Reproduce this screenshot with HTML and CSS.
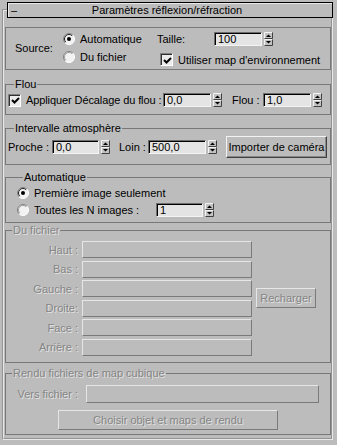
FILE: index.html
```html
<!DOCTYPE html>
<html lang="fr">
<head>
  <meta charset="UTF-8" />
  <title>Paramètres réflexion/réfraction</title>
  <link rel="stylesheet" href="styles.css">
</head>
<body>
  <svg class="defs" width="0" height="0">
    <symbol id="spin" viewBox="0 0 9 14">
      <rect width="9" height="14" fill="#c2c2c2"/>
      <path d="M0.5 6.5V0.5H8" stroke="#f4f4f4" fill="none"/>
      <path d="M0.5 6.5H8.5V0.5" stroke="#404040" fill="none"/>
      <path d="M0.5 13.5V7.5H8" stroke="#f4f4f4" fill="none"/>
      <path d="M0.5 13.5H8.5V7.5" stroke="#404040" fill="none"/>
      <polygon points="2,5 7,5 4.5,2.5" fill="#000"/>
      <polygon points="2,9 7,9 4.5,11.5" fill="#000"/>
    </symbol>
    <symbol id="radio-on" viewBox="0 0 12 12">
      <circle cx="6" cy="6" r="5.5" fill="#f2f2f2"/>
      <path d="M2.1 9.9A5.5 5.5 0 0 1 9.9 2.1" stroke="#808080" fill="none"/>
      <path d="M2.8 9.2A4.5 4.5 0 0 1 9.2 2.8" stroke="#202020" fill="none"/>
      <path d="M2.1 9.9A5.5 5.5 0 0 0 9.9 2.1" stroke="#ffffff" fill="none"/>
      <circle cx="6" cy="6" r="2" fill="#000"/>
    </symbol>
    <symbol id="radio-off" viewBox="0 0 12 12">
      <circle cx="6" cy="6" r="5.5" fill="#f2f2f2"/>
      <path d="M2.1 9.9A5.5 5.5 0 0 1 9.9 2.1" stroke="#808080" fill="none"/>
      <path d="M2.8 9.2A4.5 4.5 0 0 1 9.2 2.8" stroke="#a0a0a0" fill="none"/>
      <path d="M2.1 9.9A5.5 5.5 0 0 0 9.9 2.1" stroke="#ffffff" fill="none"/>
    </symbol>
    <symbol id="tick" viewBox="0 0 9 9">
      <path d="M1 4L3.5 6.5L8 2" stroke="#000" stroke-width="2" fill="none"/>
    </symbol>
  </svg>

  <fieldset class="rollout">
    <legend class="title">
      <span class="minus">–</span>
      <span class="title-text">Paramètres réflexion/réfraction</span>
    </legend>

    <!-- source -->
    <div class="group source">
      <span class="src-label">Source:</span>
      <span class="radio"><svg class="rb"><use href="#radio-on"/></svg>Automatique</span>
      <span class="row">
        <span class="taille">Taille:</span>
        <span class="num w48">100</span>
        <svg class="spin"><use href="#spin"/></svg>
      </span>
      <span class="radio"><svg class="rb"><use href="#radio-off"/></svg>Du fichier</span>
      <span class="check env"><span class="box"><svg><use href="#tick"/></svg></span>Utiliser map d'environnement</span>
    </div>

    <fieldset class="group flou">
      <legend>Flou</legend>
      <div class="row">
        <span class="box"><svg><use href="#tick"/></svg></span>
        <span class="lbl lbl-decal">Appliquer Décalage du flou :</span>
        <span class="num w48">0,0</span>
        <svg class="spin"><use href="#spin"/></svg>
        <span class="lbl lbl-flou">Flou :</span>
        <span class="num w48">1,0</span>
        <svg class="spin"><use href="#spin"/></svg>
      </div>
    </fieldset>

    <fieldset class="group atmo">
      <legend>Intervalle atmosphère</legend>
      <div class="row">
        <span class="lbl lbl-proche">Proche :</span>
        <span class="num w47">0,0</span>
        <svg class="spin"><use href="#spin"/></svg>
        <span class="lbl lbl-loin">Loin :</span>
        <span class="num w58">500,0</span>
        <svg class="spin"><use href="#spin"/></svg>
        <span class="btn btn-cam">Importer de caméra</span>
      </div>
    </fieldset>

    <fieldset class="group auto">
      <legend>Automatique</legend>
      <span class="radio"><svg class="rb"><use href="#radio-on"/></svg>Première image seulement</span>
      <div class="row">
        <span class="radio toutes"><svg class="rb"><use href="#radio-off"/></svg>Toutes les N images :</span>
        <span class="num w47">1</span>
        <svg class="spin"><use href="#spin"/></svg>
      </div>
    </fieldset>

    <fieldset class="group off fichier">
      <legend>Du fichier</legend>
      <span class="side">Haut :</span><span class="field"></span>
      <span class="side">Bas :</span><span class="field"></span>
      <span class="side">Gauche :</span><span class="field"></span>
      <span class="side">Droite:</span><span class="field"></span>
      <span class="side">Face :</span><span class="field"></span>
      <span class="side">Arrière :</span><span class="field"></span>
      <span class="btn btn-reload">Recharger</span>
    </fieldset>

    <fieldset class="group off rendu">
      <legend>Rendu fichiers de map cubique</legend>
      <div class="row">
        <span class="side">Vers fichier :</span>
        <span class="field field-vers"></span>
      </div>
      <span class="btn btn-choisir">Choisir objet et maps de rendu</span>
    </fieldset>
  </fieldset>
</body>
</html>
```

FILE: styles.css
```css
* {
  box-sizing: border-box;
}
body {
  margin: 0;
  width: 337px;
  height: 445px;
  overflow: hidden;
  background: #bcbcbc;
  font-family: 'Liberation Sans', Arial, sans-serif;
  font-size: 11px;
  color: #000;
}
.defs {
  position: absolute;
}

/* rollout */
.rollout {
  margin: 2px 0 0 2px;
  width: 331px;
  min-width: 0;
  height: 438px;
  padding: 0;
  border: 2px groove #e8e8e8;
}
.title {
  margin-left: 3px;
  padding: 0;
  width: 326px;
  height: 16px;
  border: 1px solid #000;
  box-shadow: inset 1px 1px 0 #e8e8e8;
  background: #bcbcbc;
  display: flex;
  align-items: center;
  line-height: 14px;
}
.minus {
  width: 10px;
  padding-left: 3px;
}
.title-text {
  flex: 1;
  text-align: center;
  padding-right: 16px;
}

/* groups */
.group {
  margin: 0 0 0 1px;
  width: 326px;
  min-width: 0;
  border: 1px solid #787878;
  padding: 0;
}
.group legend {
  margin-left: 6px;
  padding: 0 1px;
  line-height: 13px;
  background: #bcbcbc;
}
.row {
  display: flex;
  align-items: center;
}

.source {
  margin-top: 9px;
  height: 43px;
  display: grid;
  grid-template-columns: 48px 94px 1fr;
  grid-template-rows: 16px 16px;
  row-gap: 2px;
  align-items: center;
  padding: 3px 0 0 9px;
}
.src-label {
  grid-row: 1 / 3;
}
.radio {
  display: flex;
  align-items: center;
  gap: 5px;
}
.rb {
  width: 12px;
  height: 12px;
}
.taille {
  width: 57px;
}
.check {
  display: flex;
  align-items: center;
  gap: 5px;
}
.env {
  margin: 5px 0 0 3px;
}
.box {
  width: 13px;
  height: 13px;
  flex: none;
  display: flex;
  align-items: center;
  justify-content: center;
  border: 1px solid;
  border-color: #808080 #ffffff #ffffff #808080;
  box-shadow: inset 1px 1px 0 #303030;
  background: #ececec;
}
.box svg {
  width: 9px;
  height: 9px;
  margin: 1px 0 0 1px;
}

/* inputs */
.num {
  height: 14px;
  flex: none;
  padding: 0 0 0 3px;
  line-height: 12px;
  border: 1px solid;
  border-color: #6c6c6c #f4f4f4 #f4f4f4 #6c6c6c;
  box-shadow: inset 1px 1px 0 #000;
  background: #e4e4e4;
}
.w47 { width: 47px; }
.w48 { width: 48px; }
.w58 { width: 58px; }
.spin {
  width: 9px;
  height: 14px;
  flex: none;
  margin-left: 2px;
}
.btn {
  display: flex;
  align-items: center;
  justify-content: center;
  border: 1px solid;
  border-color: #f2f2f2 #404040 #404040 #f2f2f2;
  box-shadow: inset -1px -1px 0 #8a8a8a;
}

/* flou */
.flou {
  margin-top: 8px;
  padding: 2px 0 7px 2px;
}
.flou .box {
  margin-right: 5px;
}
.lbl-decal { width: 137px; white-space: nowrap; letter-spacing: -0.1px; }
.lbl-flou { width: 31px; margin-left: 10px; }

/* intervalle */
.atmo {
  margin-top: 7px;
  padding: 1px 0 6px 2px;
}
.lbl-proche { width: 44px; }
.lbl-loin { width: 29px; margin-left: 9px; }
.btn-cam {
  width: 101px;
  height: 22px;
  margin-left: 9px;
}

/* automatique */
.auto {
  margin-top: 6px;
  padding: 3px 0 4px 11px;
}
.auto .row {
  margin-top: 3px;
  height: 16px;
}
.toutes {
  width: 139px;
}

/* disabled */
.off {
  color: #858585;
  text-shadow: 1px 1px 0 #e2e2e2;
}
.field {
  height: 17px;
  border: 1px solid;
  border-color: #e6e6e6 #7a7a7a #7a7a7a #e6e6e6;
}
.side {
  text-align: right;
}
.fichier {
  margin-top: 1px;
  display: grid;
  grid-template-columns: 72px 170px 60px;
  grid-auto-rows: 17px;
  column-gap: 4px;
  row-gap: 2.6px;
  align-items: center;
  padding: 4px 0 6px 0;
}
.fichier .side {
  grid-column: 1;
}
.fichier .field {
  grid-column: 2;
}
.btn-reload {
  grid-column: 3;
  grid-row: 3 / 5;
  align-self: center;
  height: 20px;
  border-color: #e6e6e6 #7a7a7a #7a7a7a #e6e6e6;
  box-shadow: none;
}
.rendu {
  margin-top: 4px;
  padding: 5px 0 4px 0;
}
.rendu .side {
  width: 72px;
}
.field-vers {
  width: 233px;
  height: 18px;
  margin-left: 8px;
}
.btn-choisir {
  width: 220px;
  height: 20px;
  margin: 7px 0 0 52px;
  border-color: #e6e6e6 #7a7a7a #7a7a7a #e6e6e6;
  box-shadow: none;
}
```
